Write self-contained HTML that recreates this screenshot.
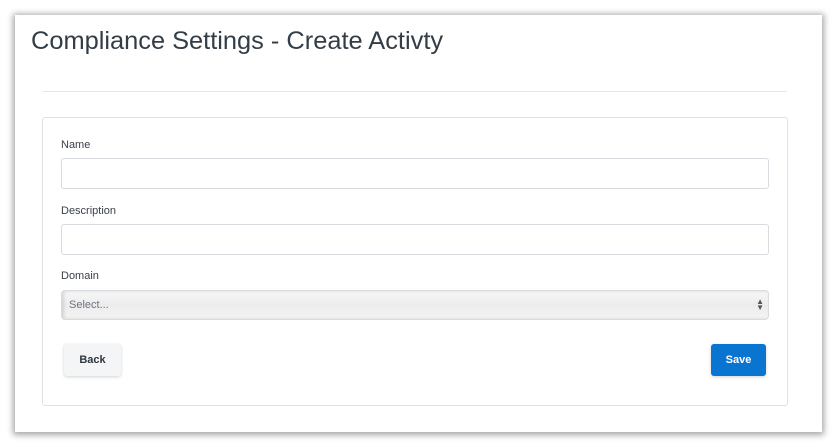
<!DOCTYPE html>
<html><head><style>
body{margin:0;width:837px;height:447px;background:#fff;font-family:"Liberation Sans",sans-serif;position:relative;overflow:hidden}
.panel{position:absolute;left:15px;top:15px;width:807px;height:417px;background:#fff;box-shadow:0 1px 6px 2px rgba(0,0,0,.35)}
h1{position:absolute;left:31px;top:27px;margin:0;font-weight:normal;font-size:25.4px;color:#333d47}
.hr{position:absolute;left:42px;top:91px;width:745px;height:1px;background:#e5e7ea}
.card{position:absolute;left:42px;top:117px;width:744px;height:287px;border:1px solid #dfe1e5;border-radius:3px}
.lbl{position:absolute;left:61px;font-size:11px;color:#3a4048}
.inp{position:absolute;left:61px;width:706px;height:29px;border:1px solid #d8dbe0;border-radius:3px;background:#fff}
.sel{position:absolute;left:61px;top:290px;width:706px;height:28px;border:1px solid #d8dbe0;border-radius:4px;background:linear-gradient(#f7f7f7,#ececec 50%,#f4f4f4);box-shadow:inset 2px 0 3px rgba(0,0,0,.12);font-size:11px;color:#6b7280;line-height:28px;text-indent:7px}
.btn{position:absolute;top:344px;height:32px;border-radius:3px;font-size:11px;font-weight:bold;text-align:center;line-height:32px}
</style></head><body>
<div class="panel"></div>
<h1>Compliance Settings - Create Activty</h1>
<div class="hr"></div>
<div class="card"></div>
<div class="lbl" style="top:139px">Name</div>
<div class="inp" style="top:158px"></div>
<div class="lbl" style="top:205px">Description</div>
<div class="inp" style="top:224px"></div>
<div class="lbl" style="top:270px">Domain</div>
<div class="sel">Select...<span style="position:absolute;right:4px;font-size:8px;line-height:6px;top:8px;color:#555;text-indent:0">▲<br>▼</span></div>
<div class="btn" style="left:64px;width:57px;background:#f4f5f7;color:#2f3640;box-shadow:0 1px 3px rgba(0,0,0,.18)">Back</div>
<div class="btn" style="left:711px;width:55px;background:#0a74d1;color:#fff;box-shadow:0 1px 3px rgba(0,0,0,.18)">Save</div>
</body></html>
